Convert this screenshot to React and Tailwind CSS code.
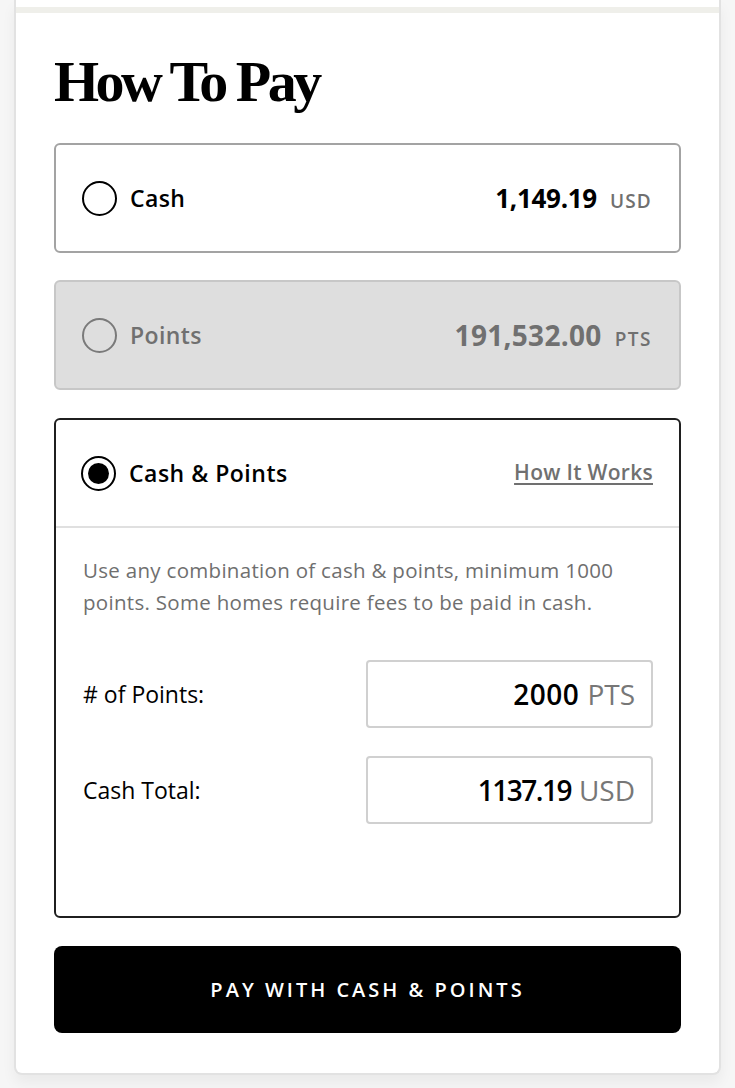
import React, { useState } from "react";

const sans = { fontFamily: '"Open Sans", "Noto Sans", sans-serif' };

const Radio = ({ checked, muted }) => (
  <span
    className={`flex h-[35px] w-[35px] shrink-0 items-center justify-center rounded-full border-2 ${
      muted ? "border-[#7a7a7a]" : "border-black"
    }`}
  >
    {checked && <span className="h-[21px] w-[21px] rounded-full bg-black" />}
  </span>
);

const AmountInput = ({ value, unit, tight }) => (
  <div className="flex h-[68px] w-[287px] items-center justify-end gap-[8px] rounded-[4px] border-2 border-[#d0d0d0] bg-white px-4">
    <span className={`text-[28px] font-semibold text-black ${tight ? "tracking-[-1.5px]" : "tracking-[0.5px]"}`}>
      {value}
    </span>
    <span className="text-[28px] text-[#777]">{unit}</span>
  </div>
);

export default function App() {
  const [method, setMethod] = useState("both");

  return (
    <div className="min-h-[1088px] bg-[#f6f6f6] px-[14px]" style={sans}>
      <div className="overflow-hidden rounded-b-[8px] border-x-2 border-b-2 border-[#e2e2e2] bg-white shadow-[0_8px_14px_rgba(0,0,0,0.05)]">
        <div className="h-[7px] bg-white" />
        <div className="h-[6px] bg-[#efefea]" />

        <div className="px-[38px] pb-[40px] pt-[40px]">
          <h1
            className="text-[58px] font-bold leading-none tracking-[-3.5px] text-black"
            style={{ fontFamily: '"Liberation Serif", "DejaVu Serif", serif' }}
          >
            How To Pay
          </h1>

          {/* Cash */}
          <button
            onClick={() => setMethod("cash")}
            className="mt-[32px] flex h-[110px] w-full items-center justify-between rounded-[6px] border-2 border-[#a3a3a3] bg-white pl-[26px] pr-[27px] text-left"
          >
            <span className="flex items-center gap-[13px]">
              <Radio checked={method === "cash"} />
              <span className="text-[23px] font-semibold tracking-[0.4px] text-black">Cash</span>
            </span>
            <span className="flex items-baseline gap-[13px]">
              <span className="text-[26px] font-bold tracking-[-0.3px] text-black">1,149.19</span>
              <span className="text-[19px] font-semibold tracking-[1.2px] text-[#707070]">USD</span>
            </span>
          </button>

          {/* Points (disabled) */}
          <div className="mt-[27px] flex h-[110px] w-full items-center justify-between rounded-[6px] border-2 border-[#c7c7c7] bg-[#dedede] pl-[26px] pr-[27px]">
            <span className="flex items-center gap-[13px]">
              <Radio muted />
              <span className="text-[23px] font-semibold tracking-[0.4px] text-[#707070]">Points</span>
            </span>
            <span className="flex items-baseline gap-[13px]">
              <span className="text-[28px] font-bold tracking-[0.3px] text-[#707070]">191,532.00</span>
              <span className="text-[19px] font-semibold tracking-[1.5px] text-[#707070]">PTS</span>
            </span>
          </div>

          {/* Cash & Points */}
          <div className="mt-[28px] h-[500px] rounded-[6px] border-2 border-[#1f1f1f] bg-white">
            <div className="flex h-[108px] items-center justify-between border-b-2 border-[#e0e0e0] pl-[25px] pr-[26px]">
              <button onClick={() => setMethod("both")} className="flex items-center gap-[13px]">
                <Radio checked={method === "both"} />
                <span className="text-[23px] font-semibold tracking-[0.5px] text-black">Cash &amp; Points</span>
              </button>
              <a className="cursor-pointer text-[21px] font-semibold tracking-[0.3px] text-[#707070] underline underline-offset-[3px]">
                How It Works
              </a>
            </div>

            <div className="pl-[27px] pr-[26px] pt-[26px]">
              <p className="text-[20.5px] leading-[32px] tracking-[0.3px] text-[#6f6f6f]">
                Use any combination of cash &amp; points, minimum 1000 points. Some homes require fees to be paid in cash.
              </p>

              <div className="mt-[42px] flex items-center justify-between">
                <span className="text-[23px] text-black">#&nbsp;of Points:</span>
                <AmountInput value="2000" unit="PTS" />
              </div>
              <div className="mt-[28px] flex items-center justify-between">
                <span className="text-[23px] text-black">Cash Total:</span>
                <AmountInput value="1137.19" unit="USD" tight />
              </div>
            </div>
          </div>

          <button className="mt-[28px] flex h-[87px] w-full items-center justify-center rounded-[8px] bg-black text-[20px] font-semibold tracking-[3px] text-white">
            PAY WITH CASH &amp; POINTS
          </button>
        </div>
      </div>
    </div>
  );
}
